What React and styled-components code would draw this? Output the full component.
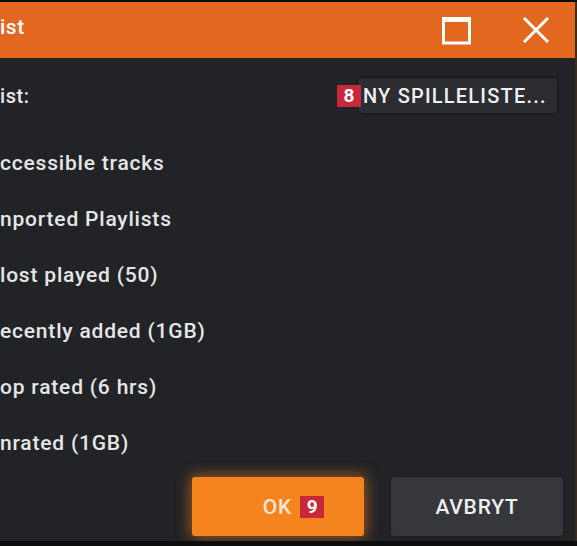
import React from 'react';
import styled, { createGlobalStyle } from 'styled-components';

const GlobalStyle = createGlobalStyle`
  html, body {
    margin: 0;
    padding: 0;
    background: #0d0d0e;
    font-family: Roboto, "Liberation Sans", sans-serif;
  }
`;

const Window = styled.div`
  margin-top: 2px;
  width: 575px;
  height: 539px;
  background: #222326;
  border-right: 2px solid #3e2c1e;
  display: flex;
  flex-direction: column;
  overflow: hidden;
`;

const TitleBar = styled.div`
  height: 56px;
  flex-shrink: 0;
  background: #e2671f;
  border-bottom: 1px solid #2a1d14;
  display: flex;
  align-items: center;
  padding-right: 24px;
`;

const Title = styled.div`
  flex: 1;
  color: #fff;
  font-size: 21px;
  font-weight: 500;
  letter-spacing: 0.5px;
  margin-top: -6px;
`;

const TitleButton = styled.button`
  background: none;
  border: 0;
  padding: 0;
  margin-left: ${(p) => p.$gap || 0}px;
  display: flex;
  align-items: center;
  justify-content: center;
  width: 30px;
  height: 30px;
`;

const Body = styled.div`
  flex: 1;
  display: flex;
  flex-direction: column;
  padding: 19px 12px 5px 0;
`;

const HeaderRow = styled.div`
  display: flex;
  align-items: center;
  justify-content: space-between;
  height: 35px;
`;

const Label = styled.div`
  color: #e8e8e8;
  font-size: 20px;
  font-weight: 500;
  letter-spacing: 0.6px;
`;

const Badge = styled.span`
  display: inline-flex;
  align-items: center;
  justify-content: center;
  width: 24px;
  height: 22px;
  background: #c8283a;
  color: #fff;
  font-size: 19px;
  font-weight: 700;
  letter-spacing: 0;
  position: relative;
  z-index: 1;
`;

const NewGroup = styled.div`
  display: flex;
  align-items: center;
  margin-right: 6px;
`;

const NewButton = styled.button`
  height: 35px;
  width: 199px;
  margin-left: -3px;
  padding: 0 0 0 5px;
  text-align: left;
  white-space: nowrap;
  background: #2b2d31;
  border: 0;
  border-radius: 4px;
  box-shadow: 0 0 3px rgba(0, 0, 0, 0.7);
  color: #eef0f2;
  font-family: Roboto, "Liberation Sans", sans-serif;
  font-size: 20px;
  font-weight: 500;
  letter-spacing: 1.2px;
`;

const List = styled.ul`
  list-style: none;
  margin: 22px 0 0 0;
  padding: 0;
`;

const Item = styled.li`
  height: 56px;
  line-height: 56px;
  color: #e6e6e6;
  font-size: 21px;
  font-weight: 500;
  letter-spacing: 0.8px;
  white-space: nowrap;
`;

const Footer = styled.div`
  display: flex;
  justify-content: flex-end;
  gap: 27px;
  margin-top: 6px;
`;

const ActionButton = styled.button`
  width: 172px;
  height: 59px;
  border: 0;
  border-radius: 3px;
  display: flex;
  align-items: center;
  justify-content: center;
  gap: 8px;
  padding: 0 0 0 ${(p) => (p.$primary ? 31 : 0)}px;
  font-family: Roboto, "Liberation Sans", sans-serif;
  font-size: 21px;
  font-weight: 500;
  letter-spacing: 0.8px;
  background: ${(p) => (p.$primary ? '#f5841f' : '#35373b')};
  color: ${(p) => (p.$primary ? '#f8e7d3' : '#eef0f2')};
  box-shadow: ${(p) =>
    p.$primary ? '0 0 14px 2px rgba(245, 132, 31, 0.55)' : '0 0 2px rgba(0,0,0,0.6)'};
`;

const items = [
  'ccessible tracks',
  'nported Playlists',
  'lost played (50)',
  'ecently added (1GB)',
  'op rated (6 hrs)',
  'nrated (1GB)',
];

const App = () => (
  <>
    <GlobalStyle />
    <Window>
      <TitleBar>
        <Title>ist</Title>
        <TitleButton>
          <svg width="29" height="29" viewBox="0 0 29 29">
            <rect x="1.5" y="3" width="26" height="24" fill="none" stroke="#fff" strokeWidth="3" />
            <rect x="0" y="1" width="29" height="5" fill="#fff" />
          </svg>
        </TitleButton>
        <TitleButton $gap={50}>
          <svg width="26" height="26" viewBox="0 0 26 26">
            <path d="M2 2 L24 24 M24 2 L2 24" stroke="#fff" strokeWidth="3" strokeLinecap="square" />
          </svg>
        </TitleButton>
      </TitleBar>
      <Body>
        <HeaderRow>
          <Label>ist:</Label>
          <NewGroup>
            <Badge>8</Badge>
            <NewButton>NY SPILLELISTE...</NewButton>
          </NewGroup>
        </HeaderRow>
        <List>
          {items.map((x) => (
            <Item key={x}>{x}</Item>
          ))}
        </List>
        <Footer>
          <ActionButton $primary>
            OK <Badge>9</Badge>
          </ActionButton>
          <ActionButton>AVBRYT</ActionButton>
        </Footer>
      </Body>
    </Window>
  </>
);

export default App;
